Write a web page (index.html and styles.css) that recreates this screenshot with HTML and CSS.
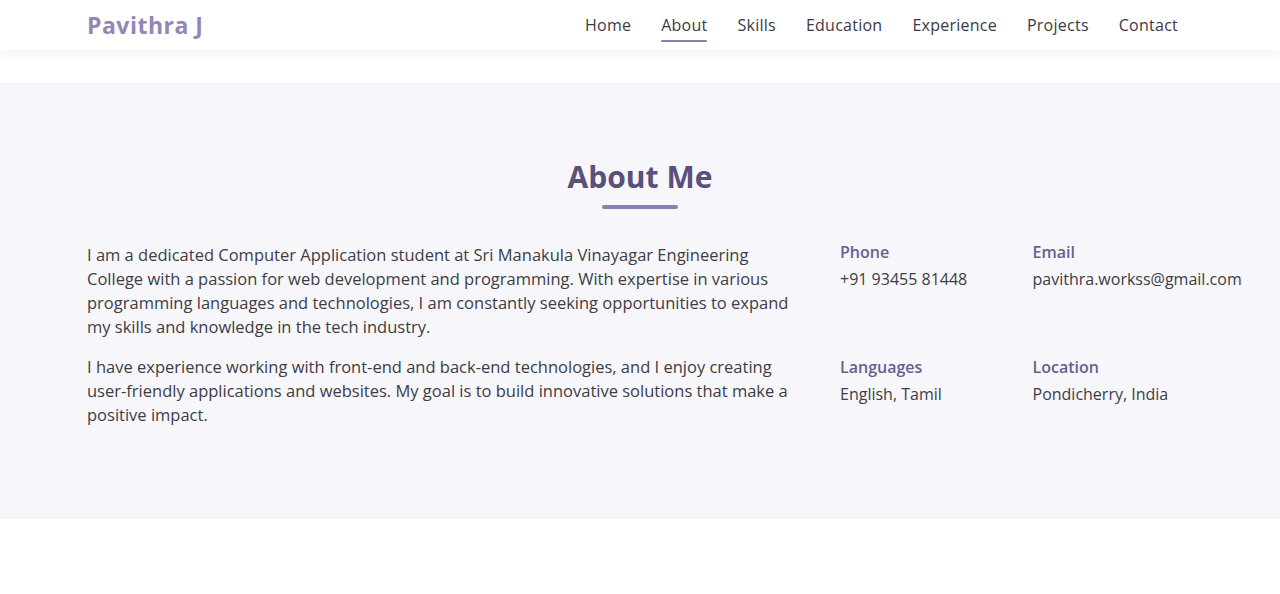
FILE: index.html
```html
<!DOCTYPE html>
<html lang="en">
<head>
<meta charset="utf-8">
<title>Pavithra J</title>
<link rel="stylesheet" href="styles.css">
</head>
<body>
<header class="site-header">
  <div class="container nav-bar">
    <a class="logo" href="#">Pavithra J</a>
    <nav class="nav-links">
      <a href="#">Home</a>
      <a href="#" class="active">About</a>
      <a href="#">Skills</a>
      <a href="#">Education</a>
      <a href="#">Experience</a>
      <a href="#">Projects</a>
      <a href="#">Contact</a>
    </nav>
  </div>
</header>
<main>
  <section class="about">
    <div class="container">
      <h2 class="section-title">About Me</h2>
      <div class="about-grid">
        <div class="about-text">
          <p>I am a dedicated Computer Application student at Sri Manakula Vinayagar Engineering College with a passion for web development and programming. With expertise in various programming languages and technologies, I am constantly seeking opportunities to expand my skills and knowledge in the tech industry.</p>
          <p>I have experience working with front-end and back-end technologies, and I enjoy creating user-friendly applications and websites. My goal is to build innovative solutions that make a positive impact.</p>
        </div>
        <div class="about-info">
          <div class="info-item">
            <h4>Phone</h4>
            <p>+91 93455 81448</p>
          </div>
          <div class="info-item">
            <h4>Email</h4>
            <p>pavithra.workss@gmail.com</p>
          </div>
          <div class="info-item">
            <h4>Languages</h4>
            <p>English, Tamil</p>
          </div>
          <div class="info-item">
            <h4>Location</h4>
            <p>Pondicherry, India</p>
          </div>
        </div>
      </div>
    </div>
  </section>
</main>
</body>
</html>
```

FILE: styles.css
```css
* { box-sizing: border-box; margin: 0; padding: 0; }

body {
  font-family: "Open Sans", "DejaVu Sans", sans-serif;
  color: #3d3d45;
  background: #ffffff;
}

a { text-decoration: none; color: inherit; }

.container {
  width: 1140px;
  margin: 0 auto;
  padding: 0 17px;
}

.site-header {
  height: 50px;
  background: #ffffff;
  box-shadow: 0 2px 10px rgba(0, 0, 0, 0.08);
  position: relative;
  z-index: 2;
}

.nav-bar {
  height: 50px;
  display: flex;
  align-items: center;
  justify-content: space-between;
}

.logo {
  font-size: 23px;
  font-weight: 700;
  color: #9486b6;
  letter-spacing: 0.5px;
}

.nav-links {
  display: flex;
  gap: 30px;
  padding-right: 15px;
}

.nav-links a {
  font-size: 16px;
  font-weight: 500;
  color: #3a3a44;
  letter-spacing: 0.25px;
  position: relative;
  padding: 4px 0;
}

.nav-links a.active::after {
  content: "";
  position: absolute;
  left: 0;
  right: 0;
  bottom: -2px;
  height: 2px;
  border-radius: 1px;
  background: #8a7fb0;
}

main { padding-top: 33px; }

.about {
  background: #f7f6fb;
  padding: 70px 0 92px;
}

.section-title {
  text-align: center;
  font-size: 30px;
  font-weight: 700;
  color: #5b4f7b;
  line-height: 48px;
  position: relative;
  padding-bottom: 8px;
  margin-bottom: 34px;
}

.section-title::after {
  content: "";
  position: absolute;
  left: 50%;
  bottom: 0;
  width: 76px;
  height: 4px;
  margin-left: -38px;
  border-radius: 2px;
  background: #8a7fb0;
}

.about-grid {
  display: grid;
  grid-template-columns: minmax(0, 1fr) 353px;
  gap: 40px;
}

.about-text p {
  font-size: 16.5px;
  line-height: 24px;
  margin-bottom: 16px;
}

.about-text p:last-child { margin-bottom: 0; }

.about-info {
  display: grid;
  grid-template-columns: repeat(2, minmax(0, 1fr));
  column-gap: 32px;
  row-gap: 67px;
  align-content: start;
}

.info-item h4 {
  font-size: 16px;
  font-weight: 600;
  color: #6a5e8e;
  line-height: 18px;
  margin-bottom: 6px;
}

.info-item p {
  font-size: 16px;
  line-height: 24px;
  white-space: nowrap;
}
```
